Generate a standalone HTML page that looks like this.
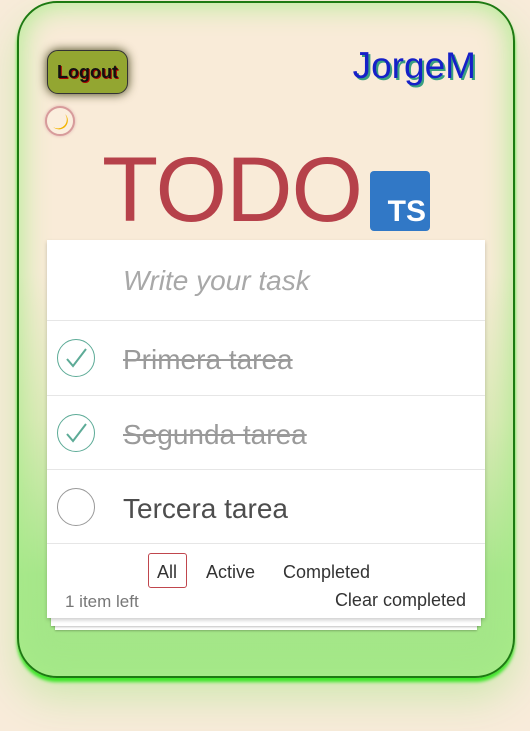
<!DOCTYPE html>
<html><head><style>
html,body{margin:0;padding:0;width:530px;height:731px;overflow:hidden;background:#f8ebda;font-family:"Liberation Sans",sans-serif}
.box{position:absolute;left:17px;top:1px;width:494px;height:673px;border:2px solid #1d7a12;border-radius:40px;
background:linear-gradient(to bottom,#f9ebd8 0%,#f9ebd8 40%,#dce9b8 62%,#a6e68a 85%,#a3e787 100%);
box-shadow:inset 0 0 30px #a8ec8a,0 4px 3px #3fe62a,0 20px 40px #cfe8b0}
.logout{position:absolute;left:47px;top:50px;width:79px;height:42px;border:1px solid #333;border-radius:11px;background:#93a631;box-shadow:0 0 10px #3c3c10;font-weight:bold;font-size:18px;line-height:42px;text-align:center;color:#111;text-shadow:1px 1px 0 #a00}
.user{position:absolute;right:54px;top:45px;font-size:37px;color:#1620c8;text-shadow:2px 2px 0 #3aa080}
.moon{position:absolute;left:45px;top:106px;width:26px;height:26px;border-radius:50%;border:2px solid #d79b9b;background:#fbeede;box-shadow:0 0 3px #e0b0b0}
.todo{position:absolute;left:102px;top:140px;font-size:92px;color:#b6414a;letter-spacing:-1px;line-height:100px;-webkit-text-stroke:0}
.ts{position:absolute;left:370px;top:171px;width:60px;height:60px;background:#3178c6;border-radius:4px;color:#fff;font-weight:bold;font-size:30px}
.ts span{position:absolute;right:4px;bottom:2px}
.sheet{position:absolute;background:#fff;box-shadow:0 1px 2px rgba(0,0,0,.25)}
.card{position:absolute;left:47px;top:240px;width:438px;height:378px;background:#fff;box-shadow:0 2px 4px rgba(0,0,0,.2)}
.row{position:absolute;left:0;width:438px;border-top:1px solid #e6e6e6;height:74px}
.row .t{position:absolute;left:76px;top:23px;font-size:28px;color:#4d4d4d}
.done .t{color:#9a9a9a;text-decoration:line-through}
.c{position:absolute;left:10px;top:18px;width:36px;height:36px;border:1px solid #999;border-radius:50%}
.done .c{border-color:#5dab97}
</style></head><body>
<div class="box"></div>
<div class="logout">Logout</div>
<div class="user">JorgeM</div>
<div class="moon"><svg width="26" height="26" viewBox="0 0 26 26"><path d="M18 6 A8 8 0 0 1 6 19 A9 9 0 0 0 18 6Z" fill="#f2b400"/></svg></div>
<div class="todo">TODO</div>
<div class="ts"><span>TS</span></div>
<div class="sheet" style="left:55px;top:620px;width:422px;height:10px"></div>
<div class="sheet" style="left:51px;top:616px;width:430px;height:10px"></div>
<div class="card">
 <div style="position:absolute;left:76px;top:25px;font-size:28px;color:#a8a8a8;font-style:italic">Write your task</div>
 <div class="row done" style="top:80px"><div class="c"><svg width="36" height="36" viewBox="0 0 36 36"><path d="M9 19 L15 26 L28 9" fill="none" stroke="#5dab97" stroke-width="2"/></svg></div><div class="t">Primera tarea</div></div>
 <div class="row done" style="top:155px"><div class="c"><svg width="36" height="36" viewBox="0 0 36 36"><path d="M9 19 L15 26 L28 9" fill="none" stroke="#5dab97" stroke-width="2"/></svg></div><div class="t">Segunda tarea</div></div>
 <div class="row" style="top:229px"><div class="c"></div><div class="t">Tercera tarea</div></div>
 <div class="row" style="top:303px;height:75px">
  <div style="position:absolute;left:101px;top:9px;width:37px;height:33px;border:1px solid #c0464d;border-radius:3px"></div>
  <div style="position:absolute;left:110px;top:18px;font-size:18px;color:#333">All</div>
  <div style="position:absolute;left:159px;top:18px;font-size:18px;color:#333">Active</div>
  <div style="position:absolute;left:236px;top:18px;font-size:18px;color:#333">Completed</div>
  <div style="position:absolute;left:18px;top:48px;font-size:17px;color:#777">1 item left</div>
  <div style="position:absolute;right:19px;top:46px;font-size:18px;color:#333">Clear completed</div>
 </div>
</div>
</body></html>
